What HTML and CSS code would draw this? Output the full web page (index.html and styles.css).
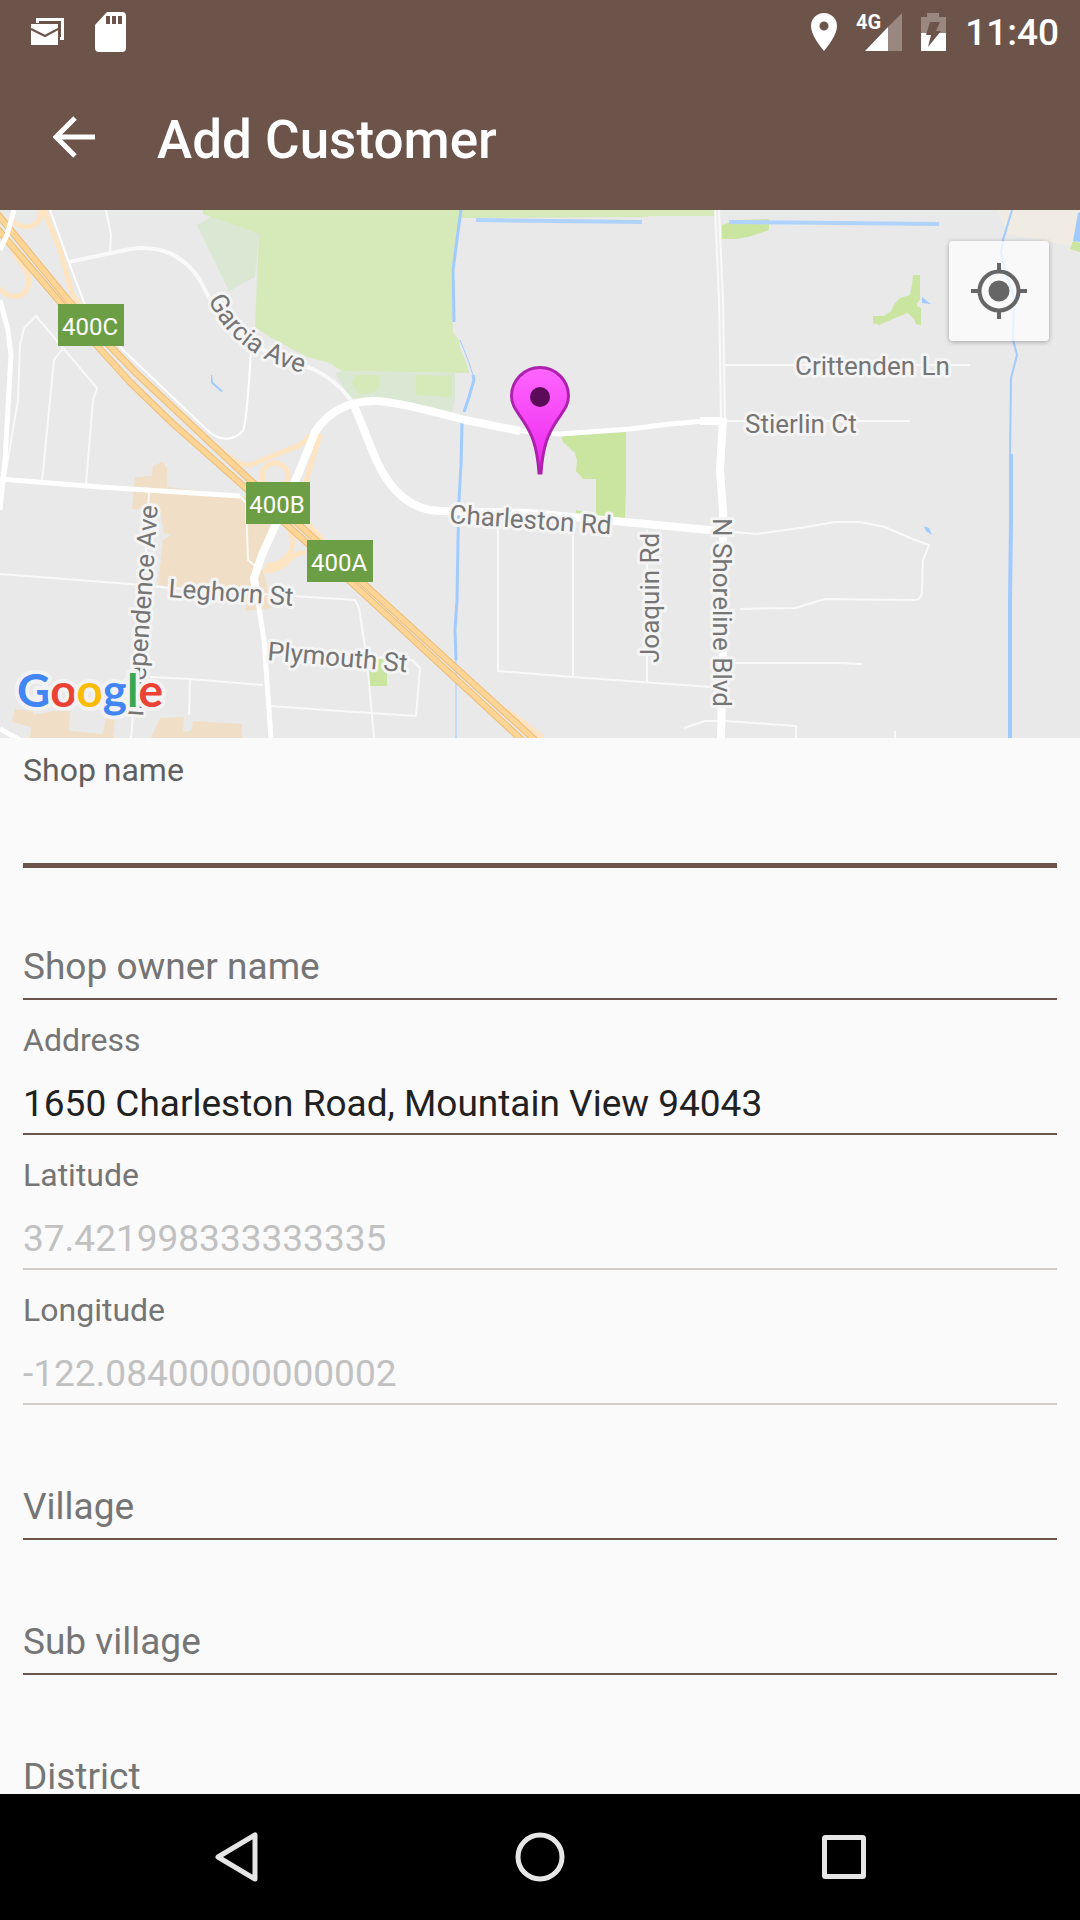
FILE: index.html
```html
<!DOCTYPE html>
<html lang="en">
<head>
<meta charset="utf-8">
<meta name="viewport" content="width=device-width, initial-scale=1">
<title>Add Customer</title>
<link rel="stylesheet" href="styles.css">
</head>
<body>
<div class="screen">
  <header class="top">
    <div class="status">
      <svg class="status-icon" width="33" height="28" viewBox="0 0 33 28" aria-hidden="true">
        <path d="M5 5V0H33V22H29V19H30V3H8V5Z" fill="#fff"/>
        <path d="M0 6H27V27H0Z" fill="#fff"/>
        <path d="M0 11L14 18L27 11" fill="none" stroke="#6d544a" stroke-width="2"/>
      </svg>
      <svg class="status-icon status-card" width="31" height="40" viewBox="0 0 31 40" aria-hidden="true">
        <path fill="#fff" fill-rule="evenodd" d="M12 0H27Q31 0 31 4V36Q31 40 27 40H4Q0 40 0 36V13ZM11 4V12H15V4ZM17 4V12H21V4ZM23 4V12H27V4Z"/>
      </svg>
      <div class="status-right">
        <svg class="status-icon" width="26" height="38" viewBox="0 0 26 38" aria-hidden="true">
          <path fill="#fff" fill-rule="evenodd" d="M13 0A13 13 0 0 1 26 13C26 22 17 33 13 38C9 33 0 22 0 13A13 13 0 0 1 13 0ZM13 8.500A4.500 4.500 0 1 0 13 17.500A4.500 4.500 0 1 0 13 8.500Z"/>
        </svg>
        <svg class="status-icon" width="46" height="38" viewBox="0 0 46 38" role="img" aria-label="4G signal">
          <path d="M46 0V38H32V14Z" fill="#9a8880"/>
          <path d="M32 14V38H9Z" fill="#fff"/>
          <text class="network" x="0" y="16">4G</text>
        </svg>
        <svg class="status-icon" width="25" height="38" viewBox="0 0 25 38" aria-hidden="true">
          <path d="M6 0H18V4H25V38H0V4H6Z" fill="#9a8880"/>
          <path d="M0 20H25V38H0Z" fill="#fff"/>
          <path d="M9 9H19L15 18H20L7 34L10 22H5Z" fill="#6d544a"/>
        </svg>
        <span class="clock">11:40</span>
      </div>
    </div>
    <div class="appbar">
      <button class="back" type="button" aria-label="Back">
        <svg width="42" height="42" viewBox="0 0 42 42" aria-hidden="true"><path d="M22 2L3 21L22 40M3 21H42" fill="none" stroke="#fff" stroke-width="5"/></svg>
      </button>
      <h1 class="title">Add Customer</h1>
    </div>
  </header>

  <section class="map" aria-label="Map">
    <svg class="map-canvas" viewBox="0 210 1080 528" preserveAspectRatio="xMidYMid slice">
      <defs>
        <linearGradient id="pin" x1="0" y1="0" x2="0" y2="1"><stop offset="0" stop-color="#ff66ff"/><stop offset="1" stop-color="#ec25ec"/></linearGradient>
        <path id="garcia" d="M208 300C226 335 249 361 318 377"/>
      </defs>
      <!-- parks -->
      <path fill="#d5e9b9" d="M203 210V214L211 217L259 234L255 327L270 337L307 357L330 363L342 371L469 373L466 362L460 348L459 340L453 333L451 270L454 258L458 225L461 218L648 217V216H716V210Z"/>
      <path fill="#dae7d3" d="M197 225L211 217L259 234L255 277L229 291ZM335 373L342 371L455 373V400L452 413L400 403L372 396L352 402Z"/>
      <path fill="#d5e9b9" d="M352 383L355 375H379V388L375 392L360 395ZM416 375L452 376V397L416 395Z"/>
      <path fill="#c9e5a0" d="M722 225L738 220L769 219V230L748 237L735 239H722ZM913 275H920V300L917 303V306L921 308V325L916 324L914 319L908 313L895 318L879 325L873 323V316H884L891 311L895 303L900 298L910 295L912 285ZM561 436L626 432V488L625 520L576 515V510L596 514V479H583L576 471L577 460L575 453L563 442ZM367 659H387V686H369ZM1073 241L1080 243V252L1070 249Z"/>
      <!-- built-up areas -->
      <path fill="#f0ece3" d="M997 210H1080V220L1071 246L1045 241L1008 234Z"/>
      <path fill="#f0dfc6" d="M153 466L162 462L167 468V487L243 496L275 505L272 525L258 558L266 580L271 608L246 611L245 592L158 585L163 540L171 535L164 533L160 510L132 509L135 477L152 476ZM15 709L33 711V715L55 711H70L69 731L103 734L106 718H115L113 738H30L31 727L12 722ZM160 718L184 717L183 732L191 731L193 721L242 724V738H151Z"/>
      <!-- water -->
      <g fill="none" stroke="#a1cbff" stroke-width="3">
        <path d="M461 210L458 232L453 270L454 322"/>
        <path d="M460 340L468 360L473 375" stroke-width="1"/>
        <path d="M473 375L474 380L469 397L464 412"/>
        <path d="M462 423L461 465L459 500L458 540L457 600L455 630L456 660"/>
        <path d="M456 655V738" stroke-width="1"/>
        <path d="M476 220L642 222M729 222L939 224" stroke="#b0d3fd" stroke-width="4"/>
        <path d="M1012 210L1003 240L1001 252L1006 275L1014 297L1013 340L1017 355L1011 378L1010 455" stroke-width="2"/>
        <path d="M1011 454V522L1010 600V738" stroke-width="4"/>
      </g>
      <path fill="#a1cbff" d="M1078 213L1080 212V242L1073 241ZM922 297L927 301L931 304L922 303ZM211 375H212L213 382L223 391L221 392L211 383ZM924 526L929 528L932 535L926 531Z"/>
      <!-- minor streets -->
      <g fill="none" stroke="#f9f9f9" stroke-width="2" stroke-linejoin="round">
        <path d="M50 210L68 260L85 305L123 350L205 428Q225 448 243 431Q247 420 251 350" stroke="#fff"/>
        <path d="M106 210L111 235L110 253M5 477L18 400L20 345L24 328L36 316L63 348L97 388L93 400L86 484M63 348L54 360L42 482"/>
        <path d="M240 496L246 503L248 560L255 566M149 492L145 570M133 715L131 738"/>
        <path d="M0 574L130 584L170 588L340 599L355 600L359 608L367 660L374 738M150 677L190 679L263 685M190 680L189 715M270 706L340 711L416 716L420 668L412 660L375 657"/>
        <path d="M498 525V671L573 677L711 687M573 535V677M647 530V682M684 728L705 721H725L796 726V738M895 731V738M725 663H840L862 664"/>
        <path d="M725 531L757 534L800 528L835 522H860L885 527L910 538L929 545L923 560L922 590Q922 600 915 600L825 599L795 608L740 609"/>
        <path d="M727 421H910M722 365H970"/>
        <path d="M69 262L130 249Q175 242 200 280Q225 335 280 358L310 368Q335 378 353 403" stroke-width="4"/>
        <path d="M717 210L721 300L723 420" stroke-width="6"/>
        <path d="M717 210L721 300L723 420" stroke="#ececec"/>
      </g>
      <!-- freeway ramps -->
      <g fill="none" stroke="#fee4c0" stroke-width="5">
        <path d="M8 219Q24 230 32 226Q43 220 40 210M44 210L60 250L72 293L80 307M12 245Q12 252 26 270Q34 287 20 296Q6 298 0 288"/>
        <path d="M217 447Q236 466 250 465L300 445L312 434M320 434L305 485M283 520Q294 535 293 545Q286 566 265 566M306 553Q296 552 290 559Q280 571 263 571M305 520L323 541"/>
        <circle cx="275" cy="476" r="13"/>
        <path d="M502 709Q514 714 543 738"/>
      </g>
      <!-- freeway -->
      <g fill="none">
        <path d="M-5 226L60 302L100 349L130 382L170 421L240 483L352 583L522 740M-5 211L68 300L109 345L135 372L249 479L363 583L535 740" stroke="#ecbc78" stroke-width="7"/>
        <path d="M-5 226L60 302L100 349L130 382L170 421L240 483L352 583L522 740M-5 211L68 300L109 345L135 372L249 479L363 583L535 740" stroke="#ffd596" stroke-width="5"/>
      </g>
      <!-- main roads -->
      <g fill="none" stroke="#fff" stroke-width="8" stroke-linejoin="round">
        <path d="M14 210L7 235L0 250M0 300L8 330L11 355L5 460L0 510M0 479L100 487L240 496M0 729L20 740" stroke-width="5"/>
        <path d="M271 738L264 640L257 595" stroke-width="5"/>
        <path d="M257 600L254 578L262 555L300 470L315 432Q335 401 375 401Q395 401 465 420L520 431"/>
        <path d="M510 430L560 434L630 429L670 424L705 421" stroke-width="5"/>
        <path d="M700 421H722"/>
        <path d="M353 403L377 462Q400 510 440 511L530 513L720 531"/>
        <path d="M723 418L720 470L723 510V640L721 738"/>
      </g>
      <g class="streets">
        <text x="795" y="375">Crittenden Ln</text>
        <text x="745" y="433">Stierlin Ct</text>
        <text transform="translate(449 523) rotate(4)">Charleston Rd</text>
        <text transform="translate(659 663) rotate(-90)">Joaquin Rd</text>
        <text transform="translate(713 518) rotate(90)">N Shoreline Blvd</text>
        <text transform="translate(168 597) rotate(4)">Leghorn St</text>
        <text transform="translate(267 660) rotate(5)">Plymouth St</text>
        <text transform="translate(143 717) rotate(-86)">Independence Ave</text>
        <text><textPath href="#garcia">Garcia Ave</textPath></text>
      </g>
      <g fill="#6b9e45"><path d="M58 304H124V346H58ZM246 482H310V524H246ZM307 540H373V582H307Z"/></g>
      <g class="exits">
        <text x="90" y="335">400C</text>
        <text x="277" y="513">400B</text>
        <text x="339" y="571">400A</text>
      </g>
      <path d="M539 473C537 444 531 433 524 422C517 411 511.500 406 511.500 396A28.500 28.500 0 0 1 568.500 396C568.500 406 563 411 556 422C549 433 543 444 541 473Z" fill="url(#pin)" stroke="#ad22ad" stroke-width="3"/>
      <circle cx="540" cy="397" r="10" fill="#5b0b58"/>
      <text class="google" x="17" y="707"><tspan fill="#4285f4">G</tspan><tspan fill="#ea4335">o</tspan><tspan fill="#fbbc05">o</tspan><tspan fill="#4285f4">g</tspan><tspan fill="#34a853">l</tspan><tspan fill="#ea4335">e</tspan></text>
    </svg>
    <button class="locate" type="button" aria-label="My location">
      <svg width="56" height="56" viewBox="0 0 56 56" aria-hidden="true">
        <circle cx="28" cy="28" r="19.500" fill="none" stroke="#666" stroke-width="4"/>
        <circle cx="28" cy="28" r="10.500" fill="#666"/>
        <path d="M28 0V8M28 48V56M0 28H8M48 28H56" stroke="#666" stroke-width="4"/>
      </svg>
    </button>
  </section>

  <form class="form">
    <div class="field field-active"><label for="shop">Shop name</label><input id="shop" type="text"></div>
    <div class="field field-empty"><label for="owner">Shop owner name</label><input id="owner" type="text"></div>
    <div class="field"><label for="address">Address</label><input id="address" type="text" value="1650 Charleston Road, Mountain View 94043"></div>
    <div class="field"><label for="lat">Latitude</label><input id="lat" type="text" value="37.421998333333335" disabled></div>
    <div class="field"><label for="lon">Longitude</label><input id="lon" type="text" value="-122.08400000000002" disabled></div>
    <div class="field field-empty"><label for="village">Village</label><input id="village" type="text"></div>
    <div class="field field-empty"><label for="subvillage">Sub village</label><input id="subvillage" type="text"></div>
    <div class="field field-empty"><label for="district">District</label><input id="district" type="text"></div>
  </form>

  <nav class="navbar" aria-label="System">
    <div class="navbar-keys">
      <button type="button" aria-label="Back"><svg width="50" height="50" viewBox="0 0 50 50"><path d="M44 3V47L7 25Z"/></svg></button>
      <button type="button" aria-label="Home"><svg width="50" height="50" viewBox="0 0 50 50"><circle cx="25" cy="25" r="22"/></svg></button>
      <button type="button" aria-label="Recent apps"><svg width="50" height="50" viewBox="0 0 50 50"><rect x="5.500" y="5.500" width="39" height="39" rx="1"/></svg></button>
    </div>
  </nav>
</div>
</body>
</html>
```
FILE: styles.css
```css
* { box-sizing: border-box; }

body {
  margin: 0;
  background: #fafafa;
  font-family: Roboto, "Liberation Sans", sans-serif;
}

button {
  display: flex;
  align-items: center;
  justify-content: center;
  padding: 0;
  border: 0;
  background: none;
}

.screen {
  display: flex;
  flex-direction: column;
  height: 100vh;
}

/* Header */
.top {
  flex: none;
  background: #6d544a;
  color: #fff;
}

.status {
  display: flex;
  align-items: center;
  height: 63px;
  padding: 0 21px 0 31px;
}

.status-icon { flex: none; overflow: visible; }
.status-card { margin-left: 31px; }

.status-right {
  display: flex;
  align-items: center;
  gap: 19px;
  margin-left: auto;
}

.network {
  font-size: 20px;
  font-weight: 700;
  fill: #fff;
}

.clock {
  padding-top: 2px;
  font-size: 37px;
  font-weight: 500;
  line-height: 44px;
}

.appbar {
  display: flex;
  align-items: center;
  gap: 62px;
  height: 147px;
  padding: 0 53px;
}

.title {
  margin: 0;
  padding-top: 6px;
  font-size: 53px;
  font-weight: 500;
  line-height: 60px;
}

/* Map */
.map {
  position: relative;
  flex: none;
  height: 528px;
  background: #e9e9e9;
}

.map-canvas {
  display: block;
  width: 100%;
  height: 100%;
}

.streets {
  font-size: 26px;
  fill: #757575;
  stroke: #f4f4f4;
  stroke-width: 6px;
  stroke-linejoin: round;
  paint-order: stroke;
}

.exits {
  font-size: 24px;
  fill: #fff;
  text-anchor: middle;
}

.google {
  font-family: Lato, sans-serif;
  font-size: 46px;
  font-weight: 700;
  stroke: #f2f2f2;
  stroke-width: 8px;
  stroke-linejoin: round;
  paint-order: stroke;
}

.locate {
  position: absolute;
  top: 31px;
  right: 31px;
  width: 100px;
  height: 100px;
  border-radius: 4px;
  background: rgba(255, 255, 255, 0.73);
  box-shadow: 0 1px 5px rgba(0, 0, 0, 0.3);
}

/* Form */
.form {
  flex: 1;
  min-height: 0;
  overflow: hidden;
  padding: 0 23px;
}

.field {
  display: grid;
  grid-template-rows: 40px auto;
  align-content: start;
  height: 135px;
  padding-top: 12px;
}

.field label {
  color: #757575;
  font-size: 32px;
  line-height: 40px;
}

.field input {
  width: 100%;
  padding: 21px 0 8px;
  border: 0;
  border-bottom: 2px solid #6d544a;
  border-radius: 0;
  outline: 0;
  background: none;
  color: #212121;
  font: 37px/44px Roboto, "Liberation Sans", sans-serif;
  height: 75px;
}

.field input:disabled {
  border-color: #d3cdca;
  color: #c1c1c1;
}

.field-active label { color: #606060; }

.field-active input {
  height: 78px;
  border-bottom-width: 5px;
}

/* An empty field shows its label in the place of the value */
.field-empty label {
  grid-area: 2 / 1;
  padding-top: 20px;
  font-size: 37px;
  line-height: 44px;
}

.field-empty input { grid-area: 2 / 1; }

/* System navigation */
.navbar {
  flex: none;
  background: #000;
}

.navbar-keys {
  display: grid;
  grid-template-columns: repeat(3, 1fr);
  max-width: 912px;
  height: 126px;
  margin: 0 auto;
}

.navbar svg {
  fill: none;
  stroke: #e6e6e6;
  stroke-width: 5px;
  stroke-linejoin: round;
}
```
